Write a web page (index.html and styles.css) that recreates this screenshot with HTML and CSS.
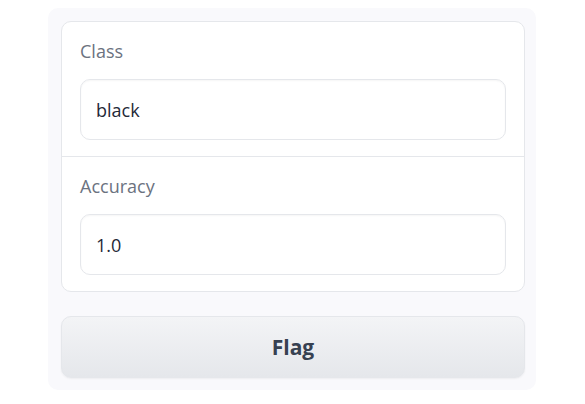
FILE: index.html
```html
<!DOCTYPE html>
<html>
<head>
<meta charset="utf-8">
<link rel="stylesheet" href="styles.css">
</head>
<body>
<div class="panel">
  <div class="card">
    <div class="field">
      <div class="label">Class</div>
      <div class="input">black</div>
    </div>
    <div class="field divided">
      <div class="label">Accuracy</div>
      <div class="input">1.0</div>
    </div>
  </div>
  <button class="flag">Flag</button>
</div>
</body>
</html>
```

FILE: styles.css
```css
html, body {
  margin: 0;
  padding: 0;
  background: #ffffff;
  font-family: "Open Sans", "Noto Sans", sans-serif;
}
.panel {
  box-sizing: border-box;
  margin: 8px 0 0 48px;
  width: 488px;
  height: 382px;
  padding: 13px 11px 12px 13px;
  background: #f9f9fc;
  border-radius: 10px;
  display: flex;
  flex-direction: column;
  gap: 24px;
}
.card {
  background: #ffffff;
  border: 1px solid #e5e7eb;
  border-radius: 10px;
  display: flex;
  flex-direction: column;
}
.field {
  padding: 17px 18px 16px 18px;
  display: flex;
  flex-direction: column;
  gap: 16px;
}
.divided {
  border-top: 1px solid #e5e7eb;
}
.label {
  font-size: 18px;
  line-height: 24px;
  color: #6b7280;
}
.input {
  box-sizing: border-box;
  height: 61px;
  border: 1px solid #e5e7eb;
  border-radius: 10px;
  padding: 0 15px;
  display: flex;
  align-items: center;
  font-size: 18px;
  color: #1f2937;
  box-shadow: inset 0 1px 2px rgba(0,0,0,0.04);
}
.flag {
  height: 62px;
  border: 1px solid #e5e7eb;
  border-radius: 10px;
  background: linear-gradient(to bottom, #f3f4f6, #e5e7eb);
  font-family: inherit;
  font-size: 21px;
  font-weight: 700;
  color: #374151;
  box-shadow: 0 1px 2px rgba(0,0,0,0.05);
}
```
